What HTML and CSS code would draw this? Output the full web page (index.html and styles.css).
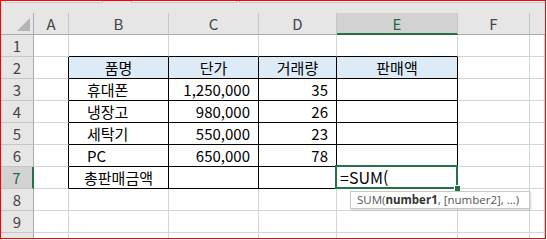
FILE: index.html
```html
<!DOCTYPE html>
<html lang="ko">
<head>
<meta charset="utf-8">
<link rel="stylesheet" href="styles.css">
</head>
<body>
<div class="frame">
  <div class="topbar">
    <div class="box box-name"></div>
    <div class="box box-mid"></div>
    <div class="box box-formula"></div>
  </div>
  <div class="sheet">
    <div class="corner"><svg width="32" height="21" viewBox="0 0 32 21"><polygon points="29,5 29,18 16,18" fill="#b4b4b4"/></svg></div>
    <div class="ch">A</div><div class="ch">B</div><div class="ch">C</div><div class="ch">D</div><div class="ch sel-col">E</div><div class="ch">F</div><div class="ch last"></div>

    <div class="rh">1</div><div class="c"></div><div class="c tb"></div><div class="c tb"></div><div class="c tb"></div><div class="c tb"></div><div class="c"></div><div class="c"></div>

    <div class="rh">2</div><div class="c tr"></div><div class="c t hd ctr">품명</div><div class="c t hd ctr">단가</div><div class="c t hd ctr">거래량</div><div class="c t hd ctr">판매액</div><div class="c"></div><div class="c"></div>

    <div class="rh">3</div><div class="c tr"></div><div class="c t ind">휴대폰</div><div class="c t num">1,250,000</div><div class="c t num">35</div><div class="c t"></div><div class="c"></div><div class="c"></div>

    <div class="rh">4</div><div class="c tr"></div><div class="c t ind">냉장고</div><div class="c t num">980,000</div><div class="c t num">26</div><div class="c t"></div><div class="c"></div><div class="c"></div>

    <div class="rh">5</div><div class="c tr"></div><div class="c t ind">세탁기</div><div class="c t num">550,000</div><div class="c t num">23</div><div class="c t"></div><div class="c"></div><div class="c"></div>

    <div class="rh">6</div><div class="c tr"></div><div class="c t ind">PC</div><div class="c t num">650,000</div><div class="c t num">78</div><div class="c t"></div><div class="c"></div><div class="c"></div>

    <div class="rh sel-row">7</div><div class="c tr"></div><div class="c t ctr">총판매금액</div><div class="c t"></div><div class="c t"></div><div class="c t active"><span class="edit">=SUM(</span><span class="cursor-box"></span><span class="handle"></span></div><div class="c"></div><div class="c"></div>

    <div class="rh">8</div><div class="c"></div><div class="c"></div><div class="c"></div><div class="c"></div><div class="c"></div><div class="c"></div><div class="c"></div>

    <div class="rh">9</div><div class="c"></div><div class="c"></div><div class="c"></div><div class="c"></div><div class="c"></div><div class="c"></div><div class="c"></div>

    <div class="rh">10</div><div class="c"></div><div class="c"></div><div class="c"></div><div class="c"></div><div class="c"></div><div class="c"></div><div class="c"></div>
  </div>
  <div class="tooltip">SUM(<b>number1</b>, [number2], ...)</div>
</div>
</body>
</html>
```

FILE: styles.css
```css
html, body {
  margin: 0;
  padding: 0;
  background: #ffffff;
}

.frame {
  position: relative;
  width: 546px;
  height: 239px;
  box-sizing: border-box;
  border: 1px solid #ff0000;
  overflow: hidden;
  background: #e6e6e6;
  font-family: "Noto Sans CJK KR", "Noto Sans", sans-serif;
}

.topbar {
  display: flex;
  height: 12px;
  background: #e6e6e6;
}

.box {
  height: 2px;
  box-sizing: border-box;
  background: #ffffff;
  border: 1px solid #c6c6c6;
  border-top: none;
}

.box-name { margin-left: 4px; width: 98px; }
.box-mid { margin-left: 28px; width: 106px; }
.box-formula { margin-left: 2px; flex: 1; border-right: none; }

.sheet {
  display: grid;
  grid-template-columns: 33px 35px 100px 90px 78px 121px 72px 1fr;
  grid-template-rows: 22px repeat(10, 22px);
  background: #ffffff;
}

.sheet > div {
  box-sizing: border-box;
}

.corner {
  background: #e6e6e6;
  border-right: 1px solid #ababab;
  border-bottom: 1px solid #ababab;
  line-height: 0;
}

.ch {
  background: #e6e6e6;
  border-right: 1px solid #c6c6c6;
  border-bottom: 1px solid #ababab;
  text-align: center;
  font-size: 15px;
  line-height: 21px;
  color: #444444;
}

.ch.last { border-right: none; }

.ch.sel-col {
  background: #d2d2d2;
  border-bottom: 2px solid #217346;
  color: #1e6b41;
}

.rh {
  background: #e6e6e6;
  border-right: 1px solid #ababab;
  border-bottom: 1px solid #c6c6c6;
  text-align: center;
  font-size: 15px;
  line-height: 21px;
  color: #444444;
}

.rh.sel-row {
  background: #d2d2d2;
  border-right: 2px solid #217346;
  color: #1e6b41;
}

.c {
  border-right: 1px solid #d4d4d4;
  border-bottom: 1px solid #d4d4d4;
  font-size: 15px;
  line-height: 21px;
  color: #000000;
  white-space: nowrap;
}

.tb { border-bottom-color: #000000; }
.tr { border-right-color: #000000; }
.t { border-right-color: #000000; border-bottom-color: #000000; }

.hd { background: #ddebf7; }
.ctr { text-align: center; }
.ind { padding-left: 18px; }
.num { text-align: right; padding-right: 8px; }

.active {
  position: relative;
  overflow: visible;
}

.edit {
  padding-left: 3px;
  font-size: 16px;
}

.cursor-box {
  position: absolute;
  left: -2px;
  top: -2px;
  right: -1px;
  bottom: -1px;
  border: 2px solid #217346;
}

.handle {
  position: absolute;
  right: -3px;
  bottom: -3px;
  width: 5px;
  height: 5px;
  background: #217346;
  box-shadow: -1px -1px 0 #ffffff;
}

.tooltip {
  position: absolute;
  left: 349px;
  top: 190px;
  width: 180px;
  height: 18px;
  box-sizing: border-box;
  background: #ffffff;
  border: 1px solid #c8c8c8;
  box-shadow: 1px 1px 2px rgba(0, 0, 0, 0.18);
  font-family: "Open Sans", "Noto Sans", sans-serif;
  font-size: 11.5px;
  line-height: 16px;
  padding-left: 6px;
  color: #555555;
  white-space: nowrap;
}

.tooltip b {
  color: #333333;
  font-weight: 700;
}
```
